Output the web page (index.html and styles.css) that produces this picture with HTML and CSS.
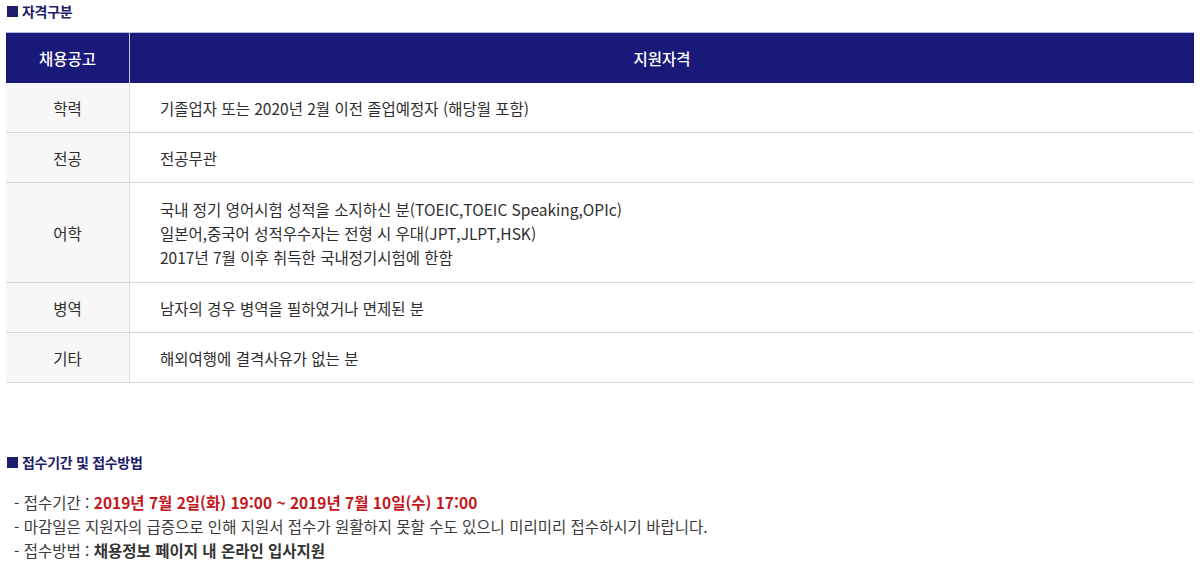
FILE: index.html
```html
<!DOCTYPE html>
<html lang="ko">
<head>
<meta charset="utf-8">
<link rel="stylesheet" href="styles.css">
</head>
<body>
<div class="page">
  <h3 class="sec-title">자격구분</h3>
  <table class="qual">
    <thead>
      <tr><th class="c1">채용공고</th><th>지원자격</th></tr>
    </thead>
    <tbody>
      <tr><td class="c1">학력</td><td class="c2">기졸업자 또는 2020년 2월 이전 졸업예정자 (해당월 포함)</td></tr>
      <tr><td class="c1">전공</td><td class="c2">전공무관</td></tr>
      <tr class="tall"><td class="c1">어학</td><td class="c2">국내 정기 영어시험 성적을 소지하신 분(TOEIC,TOEIC Speaking,OPIc)<br>일본어,중국어 성적우수자는 전형 시 우대(JPT,JLPT,HSK)<br>2017년 7월 이후 취득한 국내정기시험에 한함</td></tr>
      <tr><td class="c1">병역</td><td class="c2">남자의 경우 병역을 필하였거나 면제된 분</td></tr>
      <tr><td class="c1">기타</td><td class="c2">해외여행에 결격사유가 없는 분</td></tr>
    </tbody>
  </table>

  <h3 class="sec-title sec2">접수기간 및 접수방법</h3>
  <ul class="info">
    <li>- 접수기간 : <strong class="red">2019년 7월 2일(화) 19:00 ~ 2019년 7월 10일(수) 17:00</strong></li>
    <li>- 마감일은 지원자의 급증으로 인해 지원서 접수가 원활하지 못할 수도 있으니 미리미리 접수하시기 바랍니다.</li>
    <li>- 접수방법 : <strong>채용정보 페이지 내 온라인 입사지원</strong></li>
  </ul>
</div>
</body>
</html>
```

FILE: styles.css
```css
html, body {
  margin: 0;
  padding: 0;
  background: #fff;
}
body {
  font-family: "Noto Sans CJK KR", "Noto Sans", sans-serif;
  color: #333;
  font-size: 15.5px;
}
.page {
  padding: 0 6px;
}
.sec-title {
  margin: 0;
  padding-top: 1px;
  height: 31px;
  font-size: 14px;
  line-height: 20px;
  font-weight: 700;
  color: #1d1d6b;
  display: flex;
  align-items: flex-start;
  gap: 4px;
  letter-spacing: -0.3px;
}
.sec-title::before {
  content: "";
  display: block;
  width: 11px;
  height: 11px;
  margin-top: 5px;
  margin-left: 1px;
  background: #1d1d6b;
}
.qual {
  width: 100%;
  border-collapse: collapse;
  table-layout: fixed;
}
.qual th {
  height: 50px;
  padding: 0;
  background: #19197a;
  color: #fff;
  font-weight: 500;
  font-size: 15.5px;
  border-top: 1px solid #b8b8e4;
  border-left: 1px solid #c8c8e8;
  text-align: center;
}
.qual th.c1 {
  width: 123px;
  border-left: none;
}
.qual td {
  height: 49px;
  padding: 0;
  border-bottom: 1px solid #d9d9d9;
  vertical-align: middle;
  color: #2e2e2e;
}
.qual td.c1 {
  background: #f7f7f7;
  text-align: center;
  border-right: 1px solid #dddddd;
}
.qual td.c2 {
  padding-left: 30px;
  line-height: 24px;
}
.qual tr.tall td {
  height: 99px;
}
.sec2 {
  margin-top: 68px;
  height: 38px;
}
.info {
  list-style: none;
  margin: 0;
  padding: 0 0 0 8px;
  line-height: 24px;
  color: #3a3a3a;
}
.info strong {
  font-weight: 700;
  color: #333;
}
.info strong.red {
  color: #c4161c;
}
```
